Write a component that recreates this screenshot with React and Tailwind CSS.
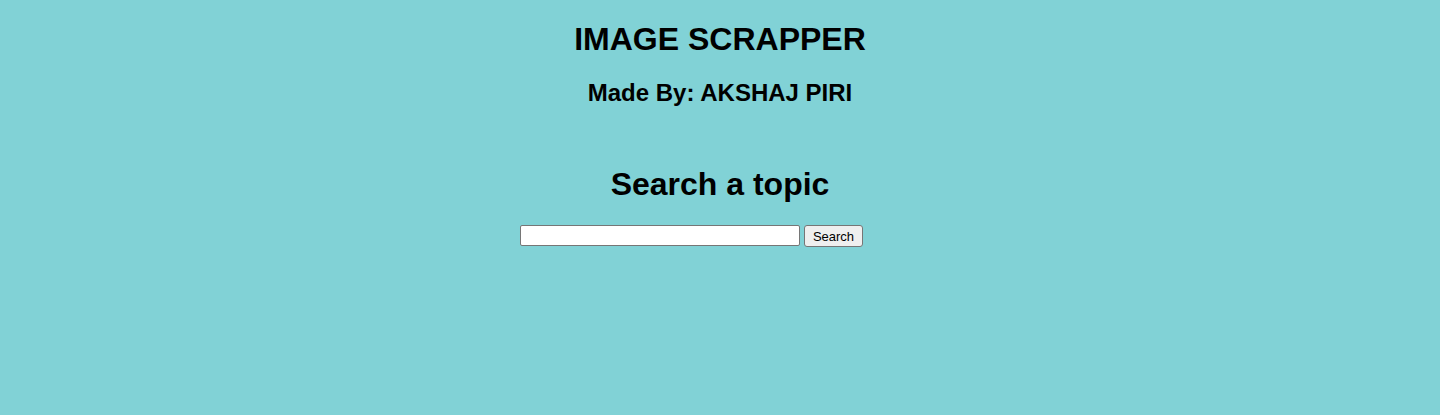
import React, { useState } from "react";

export default function App() {
  const [query, setQuery] = useState("");

  return (
    <div className="min-h-[415px] bg-[#81d2d6] text-black font-['Liberation_Sans',Arial,sans-serif] text-center overflow-hidden">
      <h1 className="pt-[21px] text-[32px] leading-[37px] font-bold">IMAGE SCRAPPER</h1>
      <h2 className="mt-[21px] text-[24px] leading-[28px] font-bold">Made By: AKSHAJ PIRI</h2>

      <h1 className="mt-[59px] text-[32px] leading-[37px] font-bold">Search a topic</h1>

      <form
        onSubmit={(e) => e.preventDefault()}
        className="mt-[22px] flex justify-center items-start gap-[4px] pr-[57px]"
      >
        <input
          type="text"
          value={query}
          onChange={(e) => setQuery(e.target.value)}
          className="w-[280px] h-[21px] px-[2px] bg-white border border-[#767676] rounded-[2px] text-[13px] outline-none"
        />
        <button
          type="submit"
          className="h-[22px] px-[8px] bg-[#efefef] border border-[#767676] rounded-[3px] text-[13px] leading-none"
        >
          Search
        </button>
      </form>
    </div>
  );
}
